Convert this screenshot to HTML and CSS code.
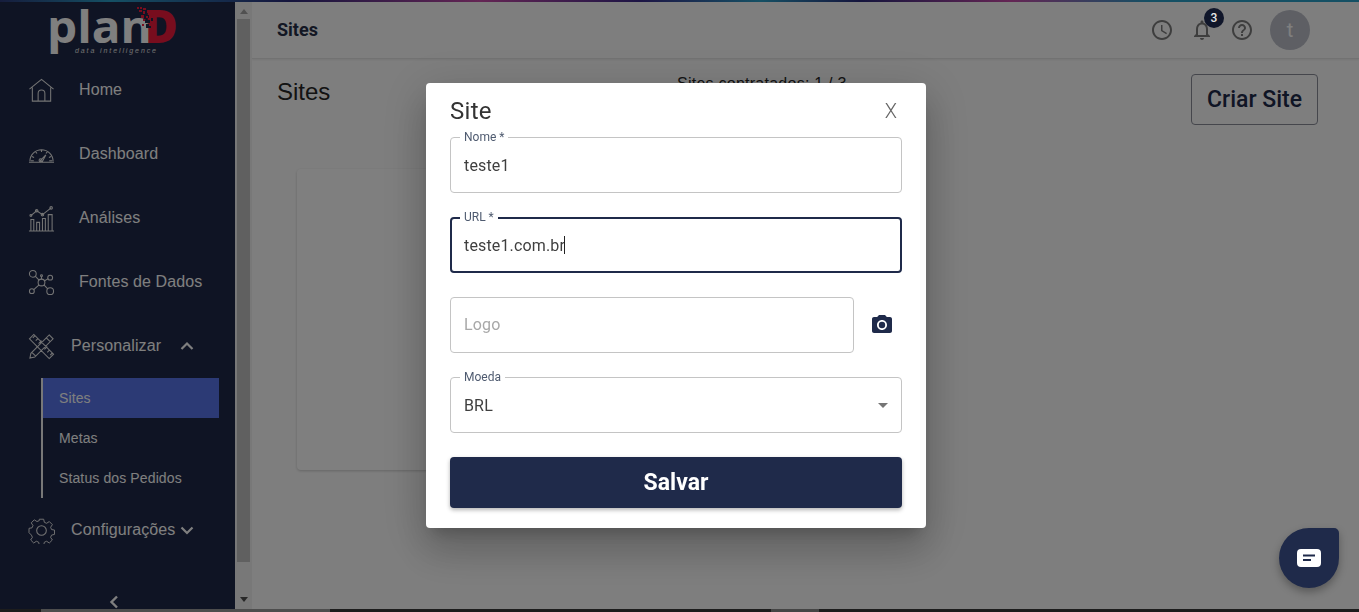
FILE: index.html
```html
<!DOCTYPE html>
<html lang="pt-BR">
<head>
<meta charset="utf-8">
<title>Sites</title>
<link rel="stylesheet" href="styles.css">
</head>
<body>
<div class="app">
  <div class="rainbow"></div>
  <div class="shell">
    <aside class="sidebar">
      <div class="logo">
        <div class="logo-word"><span class="logo-plan">plan</span><span class="logo-d">D</span></div>
        <svg class="logo-bits" viewBox="0 0 20 26" width="20" height="26">
          <g class="bits-mask">
            <rect x="8" y="8" width="4" height="3"/><rect x="8" y="13" width="5" height="3"/><rect x="9" y="17" width="3" height="4"/><rect x="14" y="11" width="2" height="3"/><rect x="12" y="19" width="2" height="2"/>
          </g>
          <g fill="#f01a3c">
            <rect x="0" y="0" width="2" height="2"/><rect x="3" y="0" width="2" height="2"/><rect x="6" y="1" width="3" height="2"/>
            <rect x="2" y="3" width="3" height="2"/><rect x="6" y="4" width="2" height="3"/><rect x="10" y="3" width="4" height="3"/>
            <rect x="4" y="8" width="3" height="3"/><rect x="9" y="9" width="2" height="2"/>
            <rect x="6" y="12" width="2" height="2"/><rect x="5" y="17" width="2" height="2"/>
          </g>
        </svg>
        <div class="logo-tag">data intelligence</div>
      </div>
      <nav class="nav">
        <a class="nav-row">
          <svg class="nav-icon" viewBox="0 0 28 28"><path d="M1.500 12.500 14 2.500l12.500 10M4.500 11v14h19V11M10.500 25v-8a3.500 3.500 0 0 1 7 0v8"/></svg>
          <span>Home</span>
        </a>
        <a class="nav-row">
          <svg class="nav-icon" viewBox="0 0 28 28"><path d="M1 22h26M2 21a12 12 0 0 1 24 0M14 9v2.500M8 11l1.300 2M20 11l-1.300 2M4 16l2.300 1.200M24 16l-2.300 1.200M3 20.500h3M22 20.500h3M12.500 20.500l6-6-4 7.500z"/><circle cx="13" cy="20" r="1.500"/></svg>
          <span>Dashboard</span>
        </a>
        <a class="nav-row">
          <svg class="nav-icon" viewBox="0 0 28 28"><path d="M1 27h26M3 27V15h3v12M9 27v-9h3v9M15 27V14h3v13M21 27V10h4v17M3 11l6-5 6 4 9-7"/><circle cx="9" cy="6" r="1.300"/><circle cx="15" cy="10" r="1.300"/><circle cx="24" cy="3" r="1.300"/><circle cx="3" cy="11" r="1"/></svg>
          <span>Análises</span>
        </a>
        <a class="nav-row">
          <svg class="nav-icon" viewBox="0 0 28 28"><circle cx="14" cy="14" r="3.500"/><circle cx="5" cy="5" r="3.500"/><circle cx="23" cy="9" r="2.500"/><circle cx="4" cy="23" r="2.500"/><circle cx="23" cy="23" r="3.500"/><circle cx="14" cy="7" r="1"/><path d="m7.500 7.500 4 4M16.800 12.500 21 10M11.500 16.500 6 21.500M16.500 16.500l4 4M14 8v2.500"/></svg>
          <span>Fontes de Dados</span>
        </a>
        <a class="nav-row nav-row-sub">
          <svg class="nav-icon" viewBox="0 0 28 28"><path d="M1.500 6 6 1.500 26.500 22 22 26.500zM5 5l2-2M8 8l2-2M11 11l3-3M17 17l3-3M20 20l2-2M23 23l2-2M22 2l4 4L7 25l-5 1 1-5zM19 5l4 4M4 20l4 4"/></svg>
          <span class="nav-label">Personalizar</span>
          <svg class="nav-chev" viewBox="0 0 22 22"><path d="m5.500 14 5.500-5.500 5.500 5.500"/></svg>
        </a>
        <div class="subnav">
          <a class="sub-row sub-active">Sites</a>
          <a class="sub-row">Metas</a>
          <a class="sub-row">Status dos Pedidos</a>
        </div>
        <a class="nav-row nav-row-sub">
          <svg class="nav-icon" viewBox="0 0 28 28"><circle cx="14" cy="14" r="5"/><path d="M11.500 1h5l.8 3.600 2.600 1.100 3.100-2 3.500 3.500-2 3.100 1.100 2.600 3.400.6v5l-3.400.8-1.100 2.600 2 3-3.500 3.500-3.100-2-2.600 1.100-.8 3.400h-5l-.8-3.400-2.600-1.100-3.100 2-3.500-3.500 2-3-1.100-2.600L-.4 16.500v-5l3.500-.6 1.100-2.600-2-3.100 3.500-3.500 3.100 2 2.600-1.100z" transform="translate(1.400 1.400) scale(.9)"/></svg>
          <span class="nav-label">Configurações</span>
          <svg class="nav-chev" viewBox="0 0 22 22"><path d="m5.500 8.500 5.500 5.500 5.500-5.500"/></svg>
        </a>
      </nav>
      <div class="collapse">
        <svg viewBox="0 0 12 14" width="12" height="14"><path d="M9 1.500 3.500 7 9 12.500"/></svg>
      </div>
    </aside>
    <div class="scrollbar">
      <div class="arrow-up"></div>
      <div class="thumb"></div>
      <div class="arrow-down"></div>
    </div>
    <main class="main">
      <header class="topbar">
        <div class="topbar-title">Sites</div>
        <div class="topbar-tools">
          <svg class="tool" viewBox="0 0 24 24"><path d="M11.990 2C6.470 2 2 6.480 2 12s4.470 10 9.990 10C17.520 22 22 17.520 22 12S17.520 2 11.990 2zM12 20c-4.420 0-8-3.580-8-8s3.580-8 8-8 8 3.580 8 8-3.580 8-8 8z"/><path d="M12.500 7H11v6l5.250 3.150.75-1.230-4.500-2.670z"/></svg>
          <div class="bell">
            <svg class="tool" viewBox="0 0 24 24"><path d="M12 22c1.100 0 2-.9 2-2h-4c0 1.100.9 2 2 2zm6-6v-5c0-3.070-1.630-5.640-4.500-6.320V4c0-.83-.67-1.500-1.500-1.500s-1.500.67-1.500 1.500v.68C7.640 5.360 6 7.920 6 11v5l-2 2v1h16v-1l-2-2zm-2 1H8v-6c0-2.480 1.510-4.500 4-4.500s4 2.020 4 4.500v6z"/></svg>
            <span class="badge">3</span>
          </div>
          <svg class="tool" viewBox="0 0 24 24"><path d="M11 18h2v-2h-2v2zm1-16C6.480 2 2 6.480 2 12s4.480 10 10 10 10-4.480 10-10S17.520 2 12 2zm0 18c-4.410 0-8-3.590-8-8s3.590-8 8-8 8 3.590 8 8-3.590 8-8 8zm0-14c-2.210 0-4 1.790-4 4h2c0-1.100.9-2 2-2s2 .9 2 2c0 2-3 1.750-3 5h2c0-2.250 3-2.500 3-5 0-2.210-1.790-4-4-4z"/></svg>
          <div class="avatar">t</div>
        </div>
      </header>
      <section class="head">
        <h1 class="page-title">Sites</h1>
        <div class="quota">Sites contratados: 1 / 3</div>
        <button class="create">Criar Site</button>
      </section>
      <div class="card"></div>
    </main>
  </div>
  <div class="strip"><span class="strip-a"></span><span class="strip-b"></span></div>
</div>

<div class="overlay">
  <div class="modal">
    <div class="modal-head">
      <h2 class="modal-title">Site</h2>
      <span class="modal-close">X</span>
    </div>
    <div class="form">
      <div class="field">
        <span class="field-label">Nome *</span>
        <span class="field-value">teste1</span>
      </div>
      <div class="field field-focus">
        <span class="field-label">URL *</span>
        <span class="field-value">teste1.com.br</span><span class="caret"></span>
      </div>
      <div class="logo-row">
        <div class="field field-grow"><span class="field-placeholder">Logo</span></div>
        <div class="camera">
          <svg viewBox="0 0 24 24" width="24" height="24"><path d="M12 15.200a3.200 3.200 0 1 0 0-6.400 3.200 3.200 0 0 0 0 6.400z"/><path d="M9 2 7.170 4H4c-1.100 0-2 .9-2 2v12c0 1.100.9 2 2 2h16c1.100 0 2-.9 2-2V6c0-1.100-.9-2-2-2h-3.170L15 2H9zm3 15c-2.760 0-5-2.240-5-5s2.240-5 5-5 5 2.240 5 5-2.240 5-5 5z"/></svg>
        </div>
      </div>
      <div class="field field-select">
        <span class="field-label">Moeda</span>
        <span class="field-value">BRL</span>
        <svg class="select-arrow" viewBox="0 0 24 24" width="24" height="24"><path d="m7 10 5 5 5-5z"/></svg>
      </div>
      <button class="save">Salvar</button>
    </div>
  </div>
</div>

<div class="chat">
  <svg viewBox="0 0 24 18" width="24" height="18"><path fill-rule="evenodd" d="M4 0h16a4 4 0 0 1 4 4v10a4 4 0 0 1-4 4H4a4 4 0 0 1-4-4V4a4 4 0 0 1 4-4zm2 5.500v2h12v-2zm0 4.500v2h8v-2z"/></svg>
</div>
</body>
</html>
```

FILE: styles.css
```css
* { box-sizing: border-box; }

html, body {
  margin: 0;
  height: 612px;
  overflow: hidden;
}

body {
  font-family: "Liberation Sans", Arial, sans-serif;
  color: #333;
}

.app {
  height: 612px;
  display: flex;
  flex-direction: column;
}

.rainbow {
  height: 2px;
  flex: none;
  background: linear-gradient(90deg, #2c3a7a 0, #2aa0c8 110px, #2a2a7a 290px, #c84aa8 480px, #3a2a8a 640px, #2aa0c8 760px, #2a2a7a 860px, #c84aa8 1010px, #2aa0c8 1150px, #2aa0c8 1359px);
}

.shell {
  flex: 1;
  min-height: 0;
  display: flex;
}

.strip {
  height: 3px;
  flex: none;
  background: #3a3a3a;
  display: flex;
}

.strip-a { width: 289px; margin-left: 41px; background: #9a9a9a; }
.strip-b { width: 48px; margin-left: 441px; background: #8a8a8a; }

/* sidebar */
.sidebar {
  width: 235px;
  flex: none;
  background: #1e2848;
  color: #fff;
  display: flex;
  flex-direction: column;
}

.logo {
  height: 56px;
  flex: none;
  position: relative;
}

.logo-word {
  position: absolute;
  left: 47px;
  top: -2px;
  display: flex;
  align-items: baseline;
  font-family: "Open Sans", sans-serif;
  font-weight: 700;
  font-size: 45px;
  line-height: 50px;
}

.logo-plan {
  width: 97px;
  transform: scaleX(1.060);
  transform-origin: left;
  color: #fff;
}

.logo-d {
  color: #f01a3c;
  font-weight: 800;
  font-size: 46px;
}

.logo-bits {
  position: absolute;
  left: 137px;
  top: 5px;
}

.bits-mask { fill: #1e2848; }

.logo-tag {
  position: absolute;
  left: 75px;
  top: 44px;
  font-size: 7px;
  line-height: 9px;
  font-style: italic;
  letter-spacing: 1.900px;
  color: #e0e0e0;
}

.nav {
  display: flex;
  flex-direction: column;
}

.nav-row {
  height: 64px;
  padding-left: 28px;
  display: flex;
  align-items: center;
  gap: 24px;
  font-size: 16px;
  letter-spacing: .1px;
}

.nav-row-sub { gap: 16px; }

.nav-icon {
  width: 27px;
  height: 27px;
  flex: none;
  fill: none;
  stroke: #e8e8e8;
  stroke-width: 1.100;
}

.nav-label { width: 105px; }

.nav-chev {
  width: 22px;
  height: 22px;
  margin-left: -16px;
  fill: none;
  stroke: #fff;
  stroke-width: 2.200;
}

.subnav {
  margin: 0 16px 0 41px;
  border-left: 2px solid #f0f0f0;
  display: flex;
  flex-direction: column;
}

.sub-row {
  height: 40px;
  padding-left: 16px;
  display: flex;
  align-items: center;
  font-size: 14px;
  letter-spacing: .12px;
}

.sub-active { background: #5874ea; }

.collapse {
  margin-top: auto;
  height: 14px;
  padding-left: 108px;
  display: flex;
}

.collapse svg {
  fill: none;
  stroke: #fff;
  stroke-width: 2.400;
}

/* scrollbar */
.scrollbar {
  width: 17px;
  flex: none;
  background: #f1f1f1;
  display: flex;
  flex-direction: column;
  align-items: center;
}

.arrow-up {
  margin-top: 7px;
  border: 4px solid transparent;
  border-top: 0;
  border-bottom: 5px solid #a3a3a3;
}

.thumb {
  width: 13px;
  height: 543px;
  margin-top: 5px;
  background: #c1c1c1;
}

.arrow-down {
  margin-top: 35px;
  border: 4px solid transparent;
  border-bottom: 0;
  border-top: 5px solid #505050;
}

/* main */
.main {
  flex: 1;
  min-width: 0;
  background: #fdfdfd;
  overflow: hidden;
}

.topbar {
  height: 57px;
  padding: 0 49px 0 25px;
  border-bottom: 1px solid #e4e4e4;
  box-shadow: 0 1px 2px rgba(0, 0, 0, .08);
  display: flex;
  align-items: center;
  justify-content: space-between;
}

.topbar-title {
  font-family: Roboto, sans-serif;
  font-weight: 700;
  font-size: 18px;
  line-height: 20px;
  color: #262f48;
}

.topbar-tools {
  display: flex;
  align-items: center;
  gap: 16px;
}

.tool {
  width: 24px;
  height: 24px;
  display: block;
  fill: #7c7c7c;
}

.bell { position: relative; }

.badge {
  position: absolute;
  z-index: 20;
  top: -10px;
  left: 14px;
  width: 20px;
  height: 20px;
  border-radius: 50%;
  background: #10162a;
  color: #e6e6e6;
  font-family: Roboto, sans-serif;
  font-size: 12px;
  font-weight: 500;
  display: flex;
  align-items: center;
  justify-content: center;
}

.avatar {
  width: 40px;
  height: 40px;
  border-radius: 50%;
  background: #bcbfc9;
  color: #fff;
  font-family: Roboto, sans-serif;
  font-size: 20px;
  display: flex;
  align-items: center;
  justify-content: center;
}

.head {
  margin: 15px 41px 0 25px;
  display: grid;
  grid-template-columns: 400px 1fr auto;
  align-items: start;
}

.page-title {
  margin: 4px 0 0;
  font-size: 24px;
  font-weight: 400;
  line-height: 28px;
  color: #262626;
}

.quota {
  margin-top: 1px;
  font-size: 16px;
  line-height: 18px;
  letter-spacing: .25px;
  color: #262626;
}

.create {
  width: 127px;
  height: 51px;
  padding: 0;
  background: transparent;
  border: 1px solid #8a8c98;
  border-radius: 4px;
  font-family: Roboto, sans-serif;
  font-weight: 500;
  font-size: 23px;
  color: #1f2a4a;
}

.card {
  width: 500px;
  height: 301px;
  margin: 44px 0 0 45px;
  background: #fff;
  border-radius: 4px;
  box-shadow: 0 1px 3px rgba(0, 0, 0, .2);
}

/* dialog */
.overlay {
  position: fixed;
  inset: 0;
  z-index: 10;
  padding: 0 7px 2px 0;
  background: rgba(0, 0, 0, .5);
  display: flex;
  align-items: center;
  justify-content: center;
}

.modal {
  width: 500px;
  height: 445px;
  padding: 0 24px;
  background: #fff;
  border-radius: 4px;
  box-shadow: 0 11px 15px -7px rgba(0, 0, 0, .2), 0 24px 38px 3px rgba(0, 0, 0, .14), 0 9px 46px 8px rgba(0, 0, 0, .12);
  font-family: Roboto, sans-serif;
}

.modal-head {
  height: 54px;
  padding-top: 3px;
  display: flex;
  align-items: center;
  justify-content: space-between;
}

.modal-title {
  margin: 0;
  font-size: 24px;
  font-weight: 400;
  letter-spacing: .3px;
  color: #333;
}

.modal-close {
  margin-right: 5px;
  font-size: 20px;
  font-weight: 300;
  color: #666;
}

.form {
  display: flex;
  flex-direction: column;
  gap: 24px;
}

.field {
  position: relative;
  height: 56px;
  padding: 0 13px;
  border: 1px solid #c4c4c4;
  border-radius: 4px;
  display: flex;
  align-items: center;
  font-size: 16px;
  letter-spacing: .15px;
}

.field-focus {
  border: 2px solid #1f2a4a;
  padding: 0 12px;
}

.field-grow { flex: 1; }

.field-label {
  position: absolute;
  top: -7px;
  left: 9px;
  padding: 0 4px;
  background: #fff;
  font-size: 12px;
  line-height: 12px;
  letter-spacing: 0;
  color: #4f5b70;
}

.field-focus .field-label { top: -8px; left: 8px; }

.field-value { padding-top: 2px; color: #3f3f3f; }

.caret {
  width: 1px;
  height: 18px;
  margin-left: -1px;
  background: #222;
}

.field-placeholder { color: #a8a8a8; }

.logo-row { display: flex; }

.camera {
  width: 48px;
  padding-left: 8px;
  display: flex;
  align-items: center;
  justify-content: center;
  fill: #1f2a4a;
}

.field-select { justify-content: space-between; padding-right: 7px; }

.select-arrow { fill: #757575; margin-right: -1px; }

.save {
  height: 51px;
  padding: 0;
  border: 0;
  border-radius: 4px;
  background: #1f2a4a;
  color: #fff;
  font-family: Roboto, sans-serif;
  font-size: 23px;
  font-weight: 700;
  box-shadow: 0 2px 4px rgba(0, 0, 0, .3);
}

/* chat */
.chat {
  position: fixed;
  z-index: 20;
  right: 20px;
  bottom: 24px;
  width: 60px;
  height: 60px;
  border-radius: 50% 5px 50% 50%;
  background: #1f2a4a;
  fill: #fff;
  box-shadow: 0 4px 8px rgba(0, 0, 0, .3);
  display: flex;
  align-items: center;
  justify-content: center;
}
```
